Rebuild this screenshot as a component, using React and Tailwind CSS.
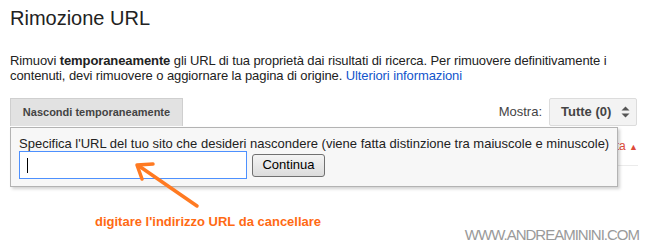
import React from "react";

export default function App() {
  return (
    <div
      className="relative w-[655px] h-[250px] overflow-hidden bg-white text-[#222]"
      style={{ fontFamily: '"Liberation Sans", Arial, sans-serif' }}
    >
      <h1 className="pl-[10px] pt-[6px] text-[20px] leading-[24px] font-normal text-[#222]">
        Rimozione URL
      </h1>
      <p className="mt-[23px] px-[10px] text-[13px] leading-[15px] tracking-[-0.1px] text-[#222]">
        Rimuovi <b>temporaneamente</b> gli URL di tua proprietà dai risultati di ricerca. Per rimuovere definitivamente i
        <br />
        contenuti, devi rimuovere o aggiornare la pagina di origine.{" "}
        <span className="text-[#1155cc]">Ulteriori informazioni</span>
      </p>

      <div className="mt-[15px] flex items-center justify-between pl-[10px] pr-[18px]">
        <div className="flex h-[28px] w-[173px] items-center justify-center border border-b-0 border-[#cfcfcf] bg-[#e2e2e2] text-[11px] font-bold text-[#444]">
          Nascondi temporaneamente
        </div>
        <div className="flex items-center gap-[7px]">
          <span className="text-[13px] text-[#444]">Mostra:</span>
          <div className="flex h-[28px] w-[88px] items-center justify-between rounded-[2px] border border-[#dcdcdc] bg-[#f3f3f3] pl-[11px] pr-[6px]">
            <span className="text-[13px] font-bold text-[#444]">Tutte (0)</span>
            <svg width="9" height="12" viewBox="0 0 9 12">
              <path d="M4.5 0.5 L8.5 4.5 L0.5 4.5 Z" fill="#555" />
              <path d="M4.5 11.5 L8.5 7.5 L0.5 7.5 Z" fill="#555" />
            </svg>
          </div>
        </div>
      </div>

      <div className="ml-[10px] flex h-[40px] w-[628px] items-start justify-end border-b border-[#ebebeb] pt-[13px]">
        <span className="text-[12px] leading-[14px] text-[#dd4b39]">
          ta <span className="text-[9px]">▲</span>
        </span>
      </div>

      <div className="mt-[48px] flex items-start justify-between pl-[95px] pr-[16px]">
        <span className="text-[13px] font-bold leading-[15px] text-[#ff6a13]">
          digitare l'indirizzo URL da cancellare
        </span>
        <span className="mt-[12px] text-[15px] leading-[17px] tracking-[-1px] text-[#9a9a9a]">
          WWW.ANDREAMININI.COM
        </span>
      </div>

      {/* Popup overlay */}
      <div className="absolute left-[10px] top-[127px] h-[60px] w-[608px] border border-[#b3b3b3] bg-[#f7f7f7] pl-[8px] pt-[8px] shadow-[2px_2px_3px_rgba(0,0,0,0.18)]">
        <div className="text-[13px] leading-[15px] text-[#222]">
          Specifica l'URL del tuo sito che desideri nascondere (viene fatta distinzione tra maiuscole e minuscole)
        </div>
        <div className="flex h-[28px] items-center gap-[5px]">
          <div className="flex h-[28px] w-[228px] items-center border border-[#4d90fe] bg-white pl-[7px]">
            <div className="h-[15px] w-px bg-black" />
          </div>
          <div className="flex h-[23px] w-[73px] items-center justify-center rounded-[3px] border border-[#707070] bg-gradient-to-b from-[#f4f4f4] to-[#dcdcdc] text-[13px] text-black">
            Continua
          </div>
        </div>
      </div>

      {/* Arrow annotation */}
      <svg className="absolute left-0 top-0" width="655" height="250" viewBox="0 0 655 250">
        <g stroke="#ff7a22" strokeWidth="3.5" strokeLinecap="round" strokeLinejoin="round" fill="none">
          <line x1="197" y1="206" x2="139" y2="166" />
          <polyline points="153,164 137,165 142,179" />
        </g>
      </svg>
    </div>
  );
}
